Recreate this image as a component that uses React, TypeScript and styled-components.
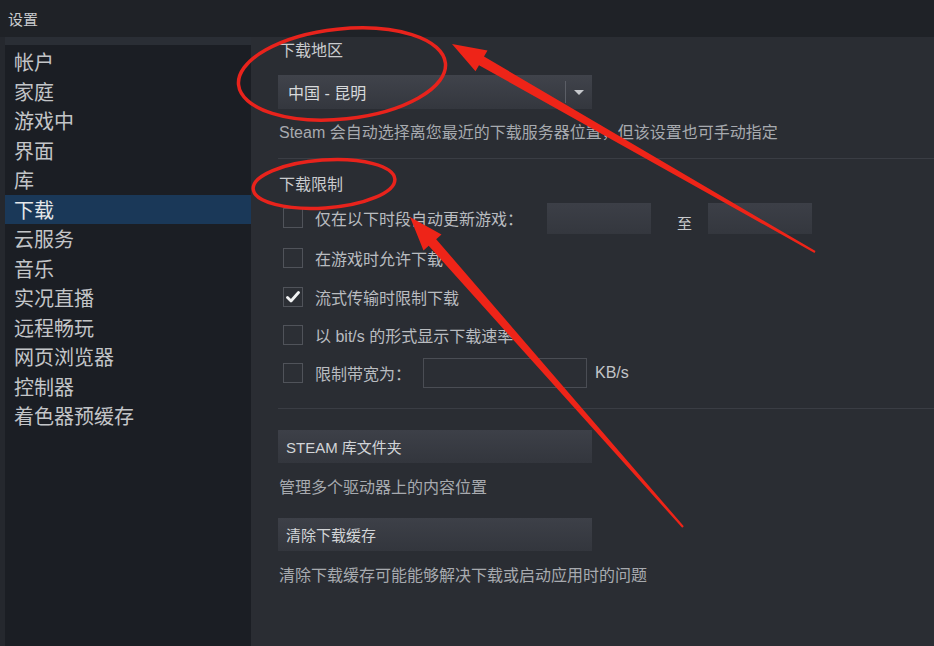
import React, { useState } from "react";
import styled, { createGlobalStyle } from "styled-components";

const GlobalStyle = createGlobalStyle`
  html, body {
    margin: 0;
    padding: 0;
    background: #23262c;
  }
  body {
    font-family: "Liberation Sans", "Noto Sans CJK SC", sans-serif;
  }
`;

const NAV_ITEMS = [
  "帐户",
  "家庭",
  "游戏中",
  "界面",
  "库",
  "下载",
  "云服务",
  "音乐",
  "实况直播",
  "远程畅玩",
  "网页浏览器",
  "控制器",
  "着色器预缓存",
];

const Window = styled.div`
  position: relative;
  width: 934px;
  height: 646px;
  overflow: hidden;
  background: #23262c;
  display: flex;
  flex-direction: column;
`;

const TitleBar = styled.div`
  height: 37px;
  flex-shrink: 0;
  padding-left: 8px;
  display: flex;
  align-items: center;
  color: #c8cacd;
  font-size: 15px;
  background: #1f2227;
`;

const Body = styled.div`
  flex: 1;
  display: flex;
  padding-left: 5px;
  background: #25282e;
`;

const Sidebar = styled.nav`
  width: 246px;
  flex-shrink: 0;
  background: #1b1e24;
  border-top: 8px solid #2a2e35;
  padding-top: 2px;
  display: flex;
  flex-direction: column;
`;

const NavItem = styled.div<{ $active?: boolean }>`
  height: 29.5px;
  display: flex;
  align-items: center;
  padding-left: 9px;
  font-size: 20px;
  color: ${(p) => (p.$active ? "#e6e8ea" : "#c3c5c8")};
  background: ${(p) => (p.$active ? "#1a3858" : "transparent")};
  cursor: pointer;
`;

const Main = styled.main`
  flex: 1;
  background: #2a2d33;
  padding: 4px 0 0 27px;
  display: flex;
  flex-direction: column;
`;

const SectionTitle = styled.div<{ $top?: number }>`
  margin-top: ${(p) => p.$top ?? 0}px;
  font-size: 16px;
  color: #c9cbce;
  height: 20px;
  line-height: 20px;
  margin-left: 1px;
`;

const Select = styled.div`
  width: 314px;
  height: 34px;
  margin-top: 14px;
  display: flex;
  align-items: center;
  background: linear-gradient(#40434b, #34373e);
  box-sizing: border-box;
`;

const SelectValue = styled.div`
  flex: 1;
  padding-left: 10px;
  font-size: 16px;
  color: #d7d9db;
`;

const SelectArrow = styled.div`
  width: 26px;
  height: 22px;
  border-left: 1px solid #5b5e66;
  display: flex;
  align-items: center;
  justify-content: center;
`;

const Caret = styled.div`
  width: 0;
  height: 0;
  border-left: 5px solid transparent;
  border-right: 5px solid transparent;
  border-top: 5px solid #c6c8cc;
`;

const Description = styled.div<{ $top?: number }>`
  margin-top: ${(p) => p.$top ?? 14}px;
  font-size: 16px;
  line-height: 18px;
  color: #a7aaaf;
  margin-left: 1px;
`;

const Divider = styled.div<{ $top: number }>`
  margin-top: ${(p) => p.$top}px;
  height: 1px;
  background: #3a3d44;
`;

const OptionList = styled.div`
  display: flex;
  flex-direction: column;
  margin-top: 4px;
`;

const OptionRow = styled.label<{ $h: number }>`
  height: ${(p) => p.$h}px;
  display: flex;
  align-items: center;
  padding-left: 5px;
  font-size: 16px;
  color: #b9bcc0;
  cursor: pointer;
`;

const Box = styled.span`
  width: 18px;
  height: 18px;
  border: 1px solid #50535a;
  background: #2c2f35;
  display: flex;
  align-items: center;
  justify-content: center;
  margin-right: 12px;
  flex-shrink: 0;
`;

const Label = styled.span<{ $w?: number }>`
  ${(p) => (p.$w ? `width: ${p.$w}px;` : "")}
`;

const TimeField = styled.div`
  width: 104px;
  height: 31px;
  background: linear-gradient(#3c3f47, #34373e);
`;

const ToLabel = styled.span`
  width: 57px;
  box-sizing: border-box;
  padding: 8px 0 0 10px;
  text-align: center;
  color: #c8cacd;
  font-size: 15px;
`;

const BandwidthInput = styled.div`
  width: 162px;
  height: 28px;
  border: 1px solid #4a4d54;
  background: #2b2e34;
  margin-left: 12px;
`;

const Unit = styled.span`
  margin-left: 8px;
  font-size: 16px;
  color: #c3c5c8;
`;

const ActionButton = styled.button<{ $top: number }>`
  margin-top: ${(p) => p.$top}px;
  width: 314px;
  height: 33px;
  border: none;
  background: linear-gradient(#3d4048, #33363d);
  color: #d2d4d7;
  font-family: inherit;
  font-size: 15px;
  text-align: left;
  padding-left: 8px;
  cursor: pointer;
`;

const Annotations = styled.svg`
  position: absolute;
  left: 0;
  top: 0;
  pointer-events: none;
`;

type CheckProps = { checked: boolean; onToggle: () => void };

const Checkbox = ({ checked, onToggle }: CheckProps) => (
  <Box onClick={onToggle}>
    {checked && (
      <svg width="14" height="12" viewBox="0 0 14 12">
        <path
          d="M1.5 6.5 L5 10 L12.5 1.5"
          fill="none"
          stroke="#f2f3f4"
          strokeWidth="2.8"
          strokeLinecap="round"
          strokeLinejoin="round"
        />
      </svg>
    )}
  </Box>
);

// thick red arrow drawn as a tapered shape
const arrowPath = (x1: number, y1: number, x2: number, y2: number) => {
  const dx = x2 - x1;
  const dy = y2 - y1;
  const len = Math.hypot(dx, dy);
  const ux = dx / len;
  const uy = dy / len;
  const nx = -uy;
  const ny = ux;
  const head = 34;
  const bx = x2 - ux * head;
  const by = y2 - uy * head;
  const p = (x: number, y: number) => `${x.toFixed(1)} ${y.toFixed(1)}`;
  return [
    `M ${p(x1 + nx * 1, y1 + ny * 1)}`,
    `L ${p(bx + nx * 5, by + ny * 5)}`,
    `L ${p(bx + nx * 12, by + ny * 12)}`,
    `L ${p(x2, y2)}`,
    `L ${p(bx - nx * 12, by - ny * 12)}`,
    `L ${p(bx - nx * 5, by - ny * 5)}`,
    `L ${p(x1 - nx * 1, y1 - ny * 1)}`,
    "Z",
  ].join(" ");
};

export default function App() {
  const [active, setActive] = useState("下载");
  const [checks, setChecks] = useState([false, false, true, false, false]);

  const toggle = (i: number) =>
    setChecks((c) => c.map((v, j) => (j === i ? !v : v)));

  return (
    <>
      <GlobalStyle />
      <Window>
        <TitleBar>设置</TitleBar>
        <Body>
          <Sidebar>
            {NAV_ITEMS.map((item) => (
              <NavItem
                key={item}
                $active={item === active}
                onClick={() => setActive(item)}
              >
                {item}
              </NavItem>
            ))}
          </Sidebar>
          <Main>
            <SectionTitle>下载地区</SectionTitle>
            <Select>
              <SelectValue>中国 - 昆明</SelectValue>
              <SelectArrow>
                <Caret />
              </SelectArrow>
            </Select>
            <Description $top={15}>
              Steam 会自动选择离您最近的下载服务器位置，但该设置也可手动指定
            </Description>
            <Divider $top={16} />
            <SectionTitle $top={16}>下载限制</SectionTitle>
            <OptionList>
              <OptionRow $h={38}>
                <Checkbox checked={checks[0]} onToggle={() => toggle(0)} />
                <Label $w={232}>仅在以下时段自动更新游戏：</Label>
                <TimeField />
                <ToLabel>至</ToLabel>
                <TimeField />
              </OptionRow>
              <OptionRow $h={41}>
                <Checkbox checked={checks[1]} onToggle={() => toggle(1)} />
                <Label>在游戏时允许下载</Label>
              </OptionRow>
              <OptionRow $h={38}>
                <Checkbox checked={checks[2]} onToggle={() => toggle(2)} />
                <Label>流式传输时限制下载</Label>
              </OptionRow>
              <OptionRow $h={38}>
                <Checkbox checked={checks[3]} onToggle={() => toggle(3)} />
                <Label>以 bit/s 的形式显示下载速率</Label>
              </OptionRow>
              <OptionRow $h={38}>
                <Checkbox checked={checks[4]} onToggle={() => toggle(4)} />
                <Label>限制带宽为：</Label>
                <BandwidthInput />
                <Unit>KB/s</Unit>
              </OptionRow>
            </OptionList>
            <Divider $top={16} />
            <ActionButton $top={21}>STEAM 库文件夹</ActionButton>
            <Description $top={16}>管理多个驱动器上的内容位置</Description>
            <ActionButton $top={21}>清除下载缓存</ActionButton>
            <Description $top={16}>
              清除下载缓存可能能够解决下载或启动应用时的问题
            </Description>
          </Main>
        </Body>
        <Annotations width="934" height="646" viewBox="0 0 934 646">
          <ellipse
            cx="342"
            cy="74"
            rx="104"
            ry="45"
            transform="rotate(-6 342 74)"
            fill="none"
            stroke="#e8231c"
            strokeWidth="3.5"
          />
          <ellipse
            cx="324"
            cy="184"
            rx="71"
            ry="24"
            transform="rotate(-4 324 184)"
            fill="none"
            stroke="#e8231c"
            strokeWidth="3.5"
          />
          <path d={arrowPath(815, 252, 452, 44)} fill="#ee2418" />
          <path d={arrowPath(683, 527, 410, 217)} fill="#ee2418" />
        </Annotations>
      </Window>
    </>
  );
}
